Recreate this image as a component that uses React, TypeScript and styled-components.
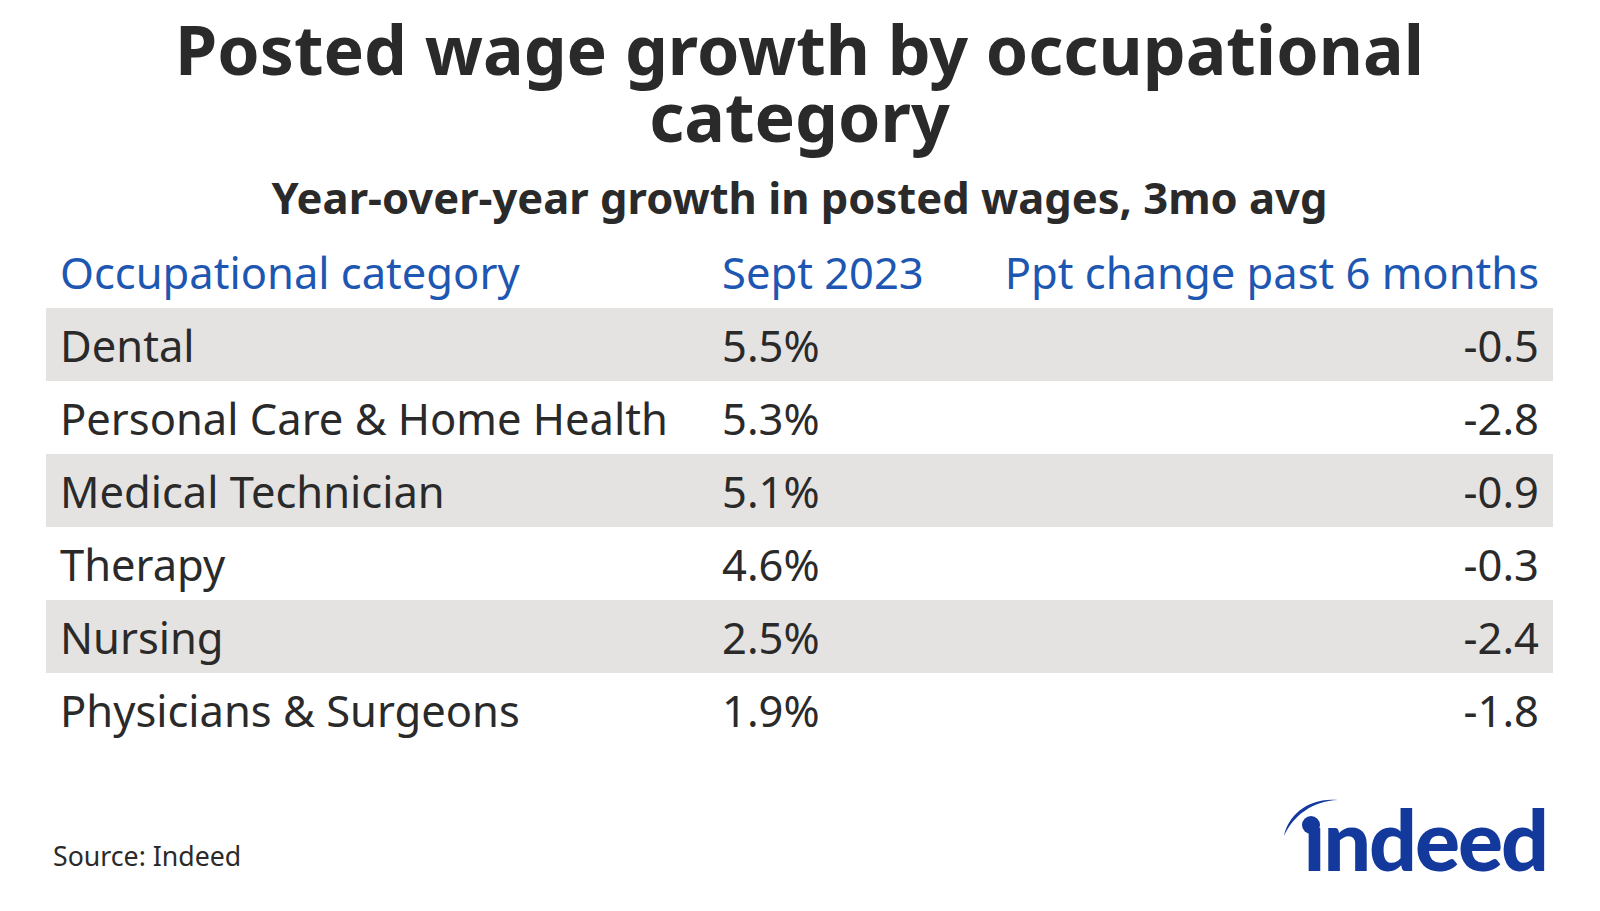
import React from 'react';
import styled, { createGlobalStyle } from 'styled-components';

const ink = '#2a2a2a';
const headerBlue = '#1d57b2';
const stripe = '#e4e3e1';
const indeedBlue = '#13399c';

interface RowData {
  category: string;
  sept: string;
  change: string;
}

const rows: RowData[] = [
  { category: 'Dental', sept: '5.5%', change: '-0.5' },
  { category: 'Personal Care & Home Health', sept: '5.3%', change: '-2.8' },
  { category: 'Medical Technician', sept: '5.1%', change: '-0.9' },
  { category: 'Therapy', sept: '4.6%', change: '-0.3' },
  { category: 'Nursing', sept: '2.5%', change: '-2.4' },
  { category: 'Physicians & Surgeons', sept: '1.9%', change: '-1.8' },
];

const GlobalStyle = createGlobalStyle`
  html, body {
    margin: 0;
    padding: 0;
    background: #ffffff;
  }
  body {
    font-family: "Noto Sans", "Open Sans", sans-serif;
    color: ${ink};
  }
`;

export default function App() {
  return (
    <>
      <GlobalStyle />
      <Page>
        <Title>Posted wage growth by occupational category</Title>
        <Subtitle>Year-over-year growth in posted wages, 3mo avg</Subtitle>
        <Table>
          <HeaderRow>
            <Cell>Occupational category</Cell>
            <Cell>Sept 2023</Cell>
            <Cell align="right">Ppt change past 6 months</Cell>
          </HeaderRow>
          {rows.map((r, i) => (
            <Row key={r.category} shaded={i % 2 === 0}>
              <Cell>{r.category}</Cell>
              <Cell>{r.sept}</Cell>
              <Cell align="right">{r.change}</Cell>
            </Row>
          ))}
        </Table>
        <Footer>
          <Source>Source: Indeed</Source>
          <Logo>
            {/* arc + dot of the "i"; the word itself is real text */}
            <LogoArc viewBox="0 0 60 50" aria-hidden="true">
              <path d="M3 47 C 7 26, 28 8, 57 11 C 31 12, 12 27, 3 47 Z" fill={indeedBlue} />
              <circle cx="30" cy="36" r="9" fill={indeedBlue} />
            </LogoArc>
            <LogoWord>ındeed</LogoWord>
          </Logo>
        </Footer>
      </Page>
    </>
  );
}

const Page = styled.div`
  width: 1600px;
  height: 911px;
  box-sizing: border-box;
  display: flex;
  flex-direction: column;
  align-items: center;
  padding: 15px 47px 0 46px;
`;

const Title = styled.h1`
  margin: 0;
  max-width: 1320px;
  font-size: 68px;
  line-height: 67px;
  font-weight: 700;
  text-align: center;
  color: ${ink};
`;

const Subtitle = styled.h2`
  margin: 23px 0 0;
  font-size: 43.5px;
  line-height: 50px;
  font-weight: 700;
  text-align: center;
  color: ${ink};
`;

const Table = styled.div`
  width: 100%;
  margin-top: 14px;
  display: flex;
  flex-direction: column;
`;

const Row = styled.div<{ shaded?: boolean }>`
  display: grid;
  grid-template-columns: 662px 1fr 1fr;
  align-items: center;
  height: 73px;
  padding: 0 14px;
  background: ${(p) => (p.shaded ? stripe : 'transparent')};
  font-size: 43.5px;
  color: ${ink};
`;

const HeaderRow = styled(Row)`
  height: 72px;
  color: ${headerBlue};
`;

const Cell = styled.div<{ align?: 'left' | 'right' }>`
  text-align: ${(p) => p.align ?? 'left'};
  white-space: nowrap;
`;

const Footer = styled.div`
  width: 100%;
  margin-top: auto;
  margin-bottom: 37px;
  display: flex;
  justify-content: space-between;
  align-items: flex-end;
`;

const Source = styled.div`
  font-size: 26.7px;
  padding-left: 7px;
  color: ${ink};
`;

const Logo = styled.div`
  position: relative;
  margin-right: 6px;
  margin-bottom: -7px;
`;

const LogoWord = styled.span`
  font-family: Lato, "Noto Sans", sans-serif;
  font-weight: 900;
  font-size: 84px;
  line-height: 1;
  letter-spacing: -2px;
  color: ${indeedBlue};
`;

const LogoArc = styled.svg`
  position: absolute;
  left: -22px;
  top: -8px;
  width: 60px;
  height: 50px;
`;
